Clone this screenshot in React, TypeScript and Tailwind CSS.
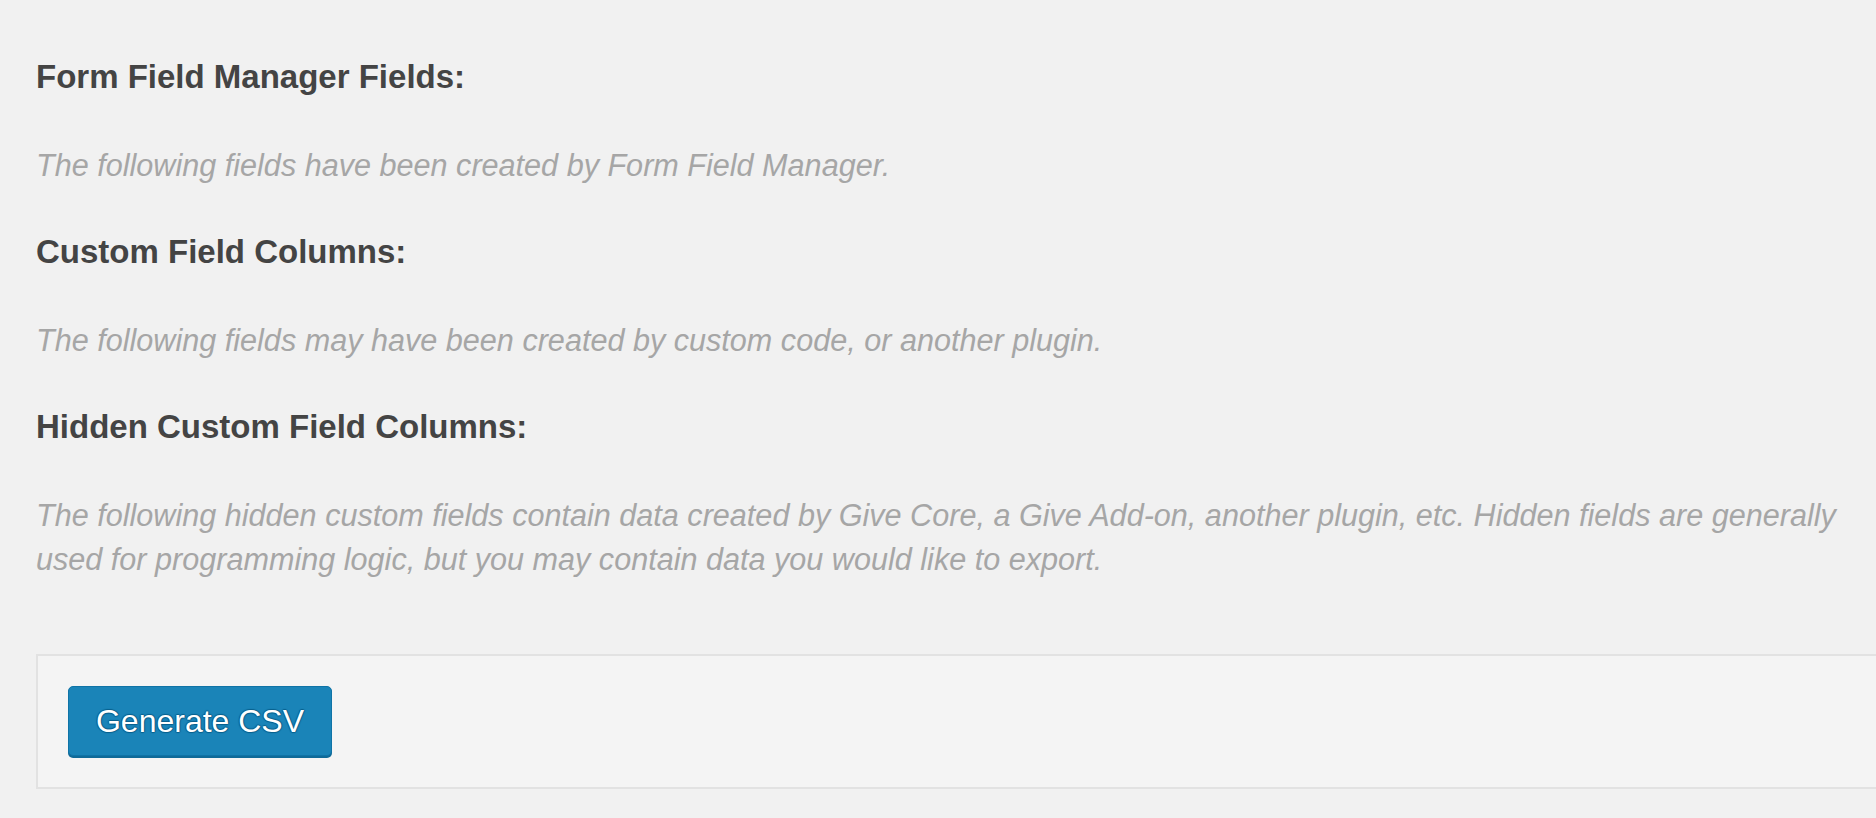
import React from "react";

const sections = [
  {
    title: "Form Field Manager Fields:",
    desc: "The following fields have been created by Form Field Manager.",
  },
  {
    title: "Custom Field Columns:",
    desc: "The following fields may have been created by custom code, or another plugin.",
  },
  {
    title: "Hidden Custom Field Columns:",
    desc: "The following hidden custom fields contain data created by Give Core, a Give Add-on, another plugin, etc. Hidden fields are generally used for programming logic, but you may contain data you would like to export.",
  },
];

export default function App() {
  return (
    <div
      className="min-h-[818px] w-full overflow-hidden bg-[#f1f1f1] pl-[36px] pt-[57px]"
      style={{ fontFamily: '"Liberation Sans", Arial, Helvetica, sans-serif' }}
    >
      <div className="pr-[20px]">
        {sections.map((s, i) => (
          <div key={i} className={i < sections.length - 1 ? "mb-[45px]" : ""}>
            <h3 className="mb-[46px] text-[33px] font-bold leading-[40px] text-[#444444]">
              {s.title}
            </h3>
            <p className="text-[30.6px] italic leading-[44px] text-[#a6a6a6]">{s.desc}</p>
          </div>
        ))}
      </div>
      <div className="mt-[73px] h-[135px] border-y-2 border-l-2 border-[#e2e2e2] bg-[#f4f4f4] pl-[30px] pt-[30px]">
        <button className="flex h-[70px] w-[264px] items-center justify-center rounded-[5px] border border-[#0f73a6] bg-[#1a84b8] text-[32px] text-white shadow-[0_2px_0_#0f6a98] [text-shadow:0_-1px_1px_#085f8c,1px_0_1px_#085f8c,0_1px_1px_#085f8c,-1px_0_1px_#085f8c]">
          Generate CSV
        </button>
      </div>
    </div>
  );
}
